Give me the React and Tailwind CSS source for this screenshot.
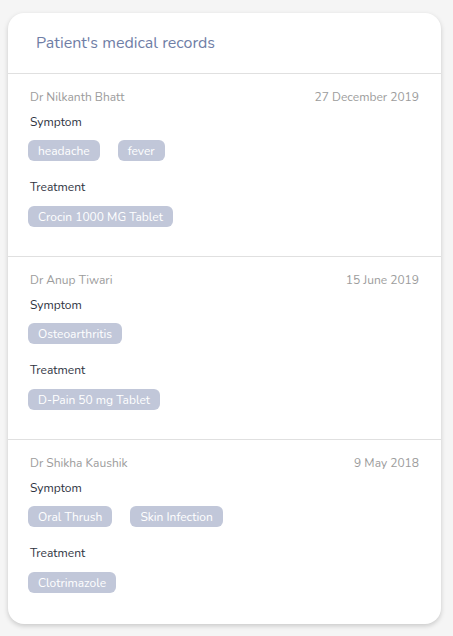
import React from 'react'

const records = [
  {
    doctor: 'Dr Nilkanth Bhatt',
    date: '27 December 2019',
    symptoms: ['headache', 'fever'],
    treatments: ['Crocin 1000 MG Tablet'],
  },
  {
    doctor: 'Dr Anup Tiwari',
    date: '15 June 2019',
    symptoms: ['Osteoarthritis'],
    treatments: ['D-Pain 50 mg Tablet'],
  },
  {
    doctor: 'Dr Shikha Kaushik',
    date: '9 May 2018',
    symptoms: ['Oral Thrush', 'Skin Infection'],
    treatments: ['Clotrimazole'],
  },
]

function Chip({ label }) {
  return (
    <span className="inline-flex h-[21px] items-center rounded-md bg-[#c1c7d9] px-[10px] text-[12px] leading-none text-white">
      {label}
    </span>
  )
}

function RecordItem({ record, last }) {
  return (
    <div className={`border-t border-[#e0e0e0] pl-5 pr-[22px] pt-[14px] ${last ? 'pb-[31px]' : 'pb-[29px]'}`}>
      <div className="flex items-center justify-between pl-0.5 text-[12px] leading-[18px] text-[#9c9c9c]">
        <span>{record.doctor}</span>
        <span>{record.date}</span>
      </div>

      <div className="mt-[7px] pl-0.5 text-[12px] leading-[18px] text-[#30343f]">Symptom</div>
      <div className="mt-[9px] flex flex-wrap gap-[18px]">
        {record.symptoms.map((s) => (
          <Chip key={s} label={s} />
        ))}
      </div>

      <div className="mt-[17px] pl-0.5 text-[12px] leading-[18px] text-[#30343f]">Treatment</div>
      <div className="mt-[10px] flex flex-wrap gap-[18px]">
        {record.treatments.map((t) => (
          <Chip key={t} label={t} />
        ))}
      </div>
    </div>
  )
}

export default function App() {
  return (
    <div className="min-h-[636px] bg-[#f5f5f5] px-2 pt-[13px] font-['Nunito','Lato',sans-serif]">
      <div className="w-[433px] overflow-hidden rounded-2xl bg-white shadow-[0_2px_5px_rgba(0,0,0,0.18)]">
        <div className="flex h-[60px] items-center pl-7 text-[16px] text-[#6f7ea6]">
          Patient's medical records
        </div>
        {records.map((r, i) => (
          <RecordItem key={r.doctor} record={r} last={i === records.length - 1} />
        ))}
      </div>
    </div>
  )
}
